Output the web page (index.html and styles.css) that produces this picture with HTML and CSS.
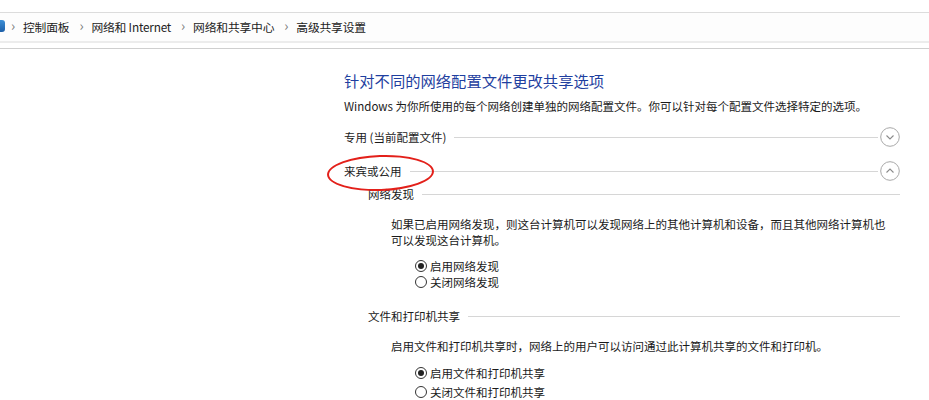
FILE: index.html
```html
<!DOCTYPE html>
<html lang="zh-CN">
<head>
<meta charset="utf-8">
<link rel="stylesheet" href="styles.css">
</head>
<body>
<div class="addr">
  <div class="crumbs">
    <span class="home"></span>
    <span class="sep">›</span><span class="crumb">控制面板</span>
    <span class="sep">›</span><span class="crumb">网络和 Internet</span>
    <span class="sep">›</span><span class="crumb">网络和共享中心</span>
    <span class="sep">›</span><span class="crumb">高级共享设置</span>
  </div>
</div>
<div class="rule"></div>
<main class="content">
  <h1 class="title">针对不同的网络配置文件更改共享选项</h1>
  <p class="desc">Windows 为你所使用的每个网络创建单独的网络配置文件。你可以针对每个配置文件选择特定的选项。</p>
  <div class="profile first">
    <span class="label">专用 (当前配置文件)</span>
    <span class="line"></span>
    <span class="toggle"><svg width="20" height="20" viewBox="0 0 20 20"><circle cx="10" cy="10" r="9.3" fill="none" stroke="#a8a8a8" stroke-width="1"/><path d="M6.5 8.5 L10 12 L13.5 8.5" fill="none" stroke="#8a8a8a" stroke-width="1.1"/></svg></span>
  </div>
  <div class="profile open">
    <span class="label circled">来宾或公用<span class="mark"></span></span>
    <span class="line"></span>
    <span class="toggle"><svg width="20" height="20" viewBox="0 0 20 20"><circle cx="10" cy="10" r="9.3" fill="none" stroke="#a8a8a8" stroke-width="1"/><path d="M6.5 11.5 L10 8 L13.5 11.5" fill="none" stroke="#8a8a8a" stroke-width="1.1"/></svg></span>
  </div>
  <section class="group">
    <div class="ghead"><span class="label">网络发现</span><span class="line"></span></div>
    <p class="gtext">如果已启用网络发现，则这台计算机可以发现网络上的其他计算机和设备，而且其他网络计算机也<br>可以发现这台计算机。</p>
    <div class="radios">
      <label class="radio"><span class="dot on"></span>启用网络发现</label>
      <label class="radio"><span class="dot"></span>关闭网络发现</label>
    </div>
  </section>
  <section class="group g2">
    <div class="ghead"><span class="label">文件和打印机共享</span><span class="line"></span></div>
    <p class="gtext">启用文件和打印机共享时，网络上的用户可以访问通过此计算机共享的文件和打印机。</p>
    <div class="radios">
      <label class="radio"><span class="dot on"></span>启用文件和打印机共享</label>
      <label class="radio"><span class="dot"></span>关闭文件和打印机共享</label>
    </div>
  </section>
</main>
</body>
</html>
```
FILE: styles.css
```css
* { box-sizing: border-box; }
html, body { margin: 0; padding: 0; }
body {
  background: #fff;
  width: 929px;
  height: 400px;
  overflow: hidden;
  font-family: "Noto Sans CJK SC", "Noto Sans", sans-serif;
  font-size: 11.5px;
  color: #1a1a1a;
}
.addr {
  margin-top: 12px;
  height: 31px;
  border-top: 1px solid #dcdcdc;
  border-bottom: 2px solid #ececec;
  background: #fdfdfd;
  display: flex;
  align-items: center;
}
.crumbs {
  display: flex;
  align-items: center;
  height: 100%;
  padding-bottom: 2px;
  font-size: 11.8px;
}
.home {
  width: 5px;
  height: 12px;
  background: linear-gradient(#3d8fd6, #1d5fa8);
  border-radius: 0 3px 3px 0;
  margin-right: 4px;
}
.sep {
  color: #777;
  font-size: 14px;
  width: 12px;
  text-align: left;
  margin-left: 2px;
  line-height: 1;
  padding-bottom: 2px;
}
.crumb {
  margin-right: 8px;
  color: #222;
  letter-spacing: -0.2px;
}
.rule {
  margin-top: 5px;
  height: 1px;
  background: #cfcfcf;
}
.content {
  padding-left: 344px;
  padding-right: 28px;
}
.title {
  margin: 20px 0 0;
  font-size: 15.3px;
  font-weight: normal;
  color: #1f3fa0;
  line-height: 22px;
  letter-spacing: 0;
}
.desc {
  margin: 6px 0 0;
  line-height: 18px;
  white-space: nowrap;
}
.profile {
  display: flex;
  align-items: center;
  height: 22px;
  margin-top: 11px;
}
.profile.open { margin-top: 12px; }
.label { white-space: nowrap; }
.line {
  flex: 1;
  height: 1px;
  background: #d6d6d6;
  margin-left: 8px;
}
.toggle {
  display: flex;
  margin-left: 2px;
  margin-right: 1px;
}
.circled { position: relative; }
.mark {
  position: absolute;
  left: -17px;
  top: -8px;
  width: 107px;
  height: 36px;
  border: 2.6px solid #e3201a;
  border-radius: 50%;
  transform: rotate(-2deg);
}
.group {
  padding-left: 24px;
  padding-right: 1px;
}
.ghead {
  display: flex;
  align-items: center;
  height: 20px;
  margin-top: 2px;
}
.gtext {
  margin: 12px 0 0 23px;
  line-height: 16px;
  white-space: nowrap;
}
.radios {
  margin: 10px 0 0 47px;
  display: flex;
  flex-direction: column;
}
.radio {
  display: flex;
  align-items: center;
  height: 16px;
  white-space: nowrap;
}
.dot {
  width: 12px;
  height: 12px;
  border: 1px solid #333;
  border-radius: 50%;
  margin-right: 3px;
  display: flex;
  align-items: center;
  justify-content: center;
}
.dot.on::after {
  content: "";
  width: 6px;
  height: 6px;
  border-radius: 50%;
  background: #222;
}
.g2 .ghead { margin-top: 16px; }
.g2 .gtext { margin-top: 12px; }
.g2 .radios { margin-top: 11px; }
.g2 .radio + .radio { margin-top: 3px; }
```
